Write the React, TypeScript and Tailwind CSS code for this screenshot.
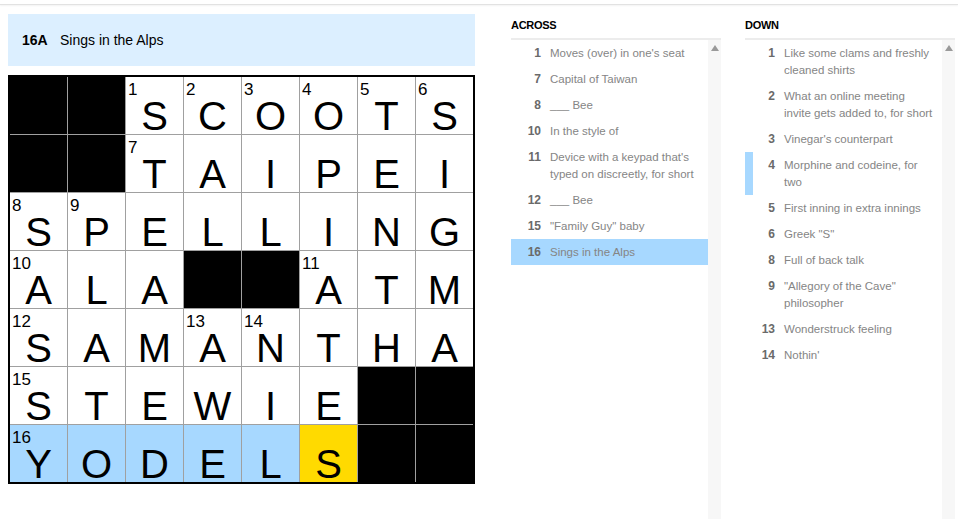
import React from "react";

const GRID = [
  "##SCOOTS",
  "##TAIPEI",
  "SPELLING",
  "ALA##ATM",
  "SAMANTHA",
  "STEWIE##",
  "YODELS##",
];

const NUMS: Record<string, number> = {
  "0-2": 1, "0-3": 2, "0-4": 3, "0-5": 4, "0-6": 5, "0-7": 6,
  "1-2": 7,
  "2-0": 8, "2-1": 9,
  "3-0": 10, "3-5": 11,
  "4-0": 12, "4-3": 13, "4-4": 14,
  "5-0": 15,
  "6-0": 16,
};

const ACROSS = [
  { n: 1, t: "Moves (over) in one's seat" },
  { n: 7, t: "Capital of Taiwan" },
  { n: 8, t: "___ Bee" },
  { n: 10, t: "In the style of" },
  { n: 11, t: "Device with a keypad that's typed on discreetly, for short" },
  { n: 12, t: "___ Bee" },
  { n: 15, t: "\"Family Guy\" baby" },
  { n: 16, t: "Sings in the Alps", active: true },
];

// non-breaking space keeps "invite gets" together so it wraps like the original
const DOWN = [
  { n: 1, t: "Like some clams and freshly cleaned shirts" },
  { n: 2, t: "What an online meeting invite\u00a0gets added to, for short" },
  { n: 3, t: "Vinegar's counterpart" },
  { n: 4, t: "Morphine and codeine, for two", related: true },
  { n: 5, t: "First inning in extra innings" },
  { n: 6, t: "Greek \"S\"" },
  { n: 8, t: "Full of back talk" },
  { n: 9, t: "\"Allegory of the Cave\" philosopher" },
  { n: 13, t: "Wonderstruck feeling" },
  { n: 14, t: "Nothin'" },
];

function Cell({ r, c, ch }: { r: number; c: number; ch: string }) {
  const num = NUMS[`${r}-${c}`];
  if (ch === "#") return <div className="bg-black" />;
  let bg = "bg-white";
  if (r === 6 && c < 5) bg = "bg-[#a7d8ff]";
  if (r === 6 && c === 5) bg = "bg-[#ffda00]";
  return (
    <div className={`relative flex items-end justify-center ${bg}`}>
      {num && (
        <span className="absolute left-[2px] top-[4px] text-[17px] leading-none text-black">
          {num}
        </span>
      )}
      <span className="text-[40px] leading-[36px] text-black">{ch}</span>
    </div>
  );
}

function ClueList({ title, clues }: { title: string; clues: { n: number; t: string; active?: boolean; related?: boolean }[] }) {
  return (
    <div className="flex flex-col w-[210px] h-full">
      <div className="pt-[14px] pb-[6px] border-b-2 border-[#ececec] text-[11px] leading-[13px] font-bold text-black tracking-tight">
        {title}
      </div>
      <div className="flex flex-1">
        <ul className="flex-1">
          {clues.map((cl) => (
            <li
              key={cl.n}
              className={`flex py-[4.5px] leading-[17px] border-l-[8px] ${cl.related ? "border-[#a7d8ff]" : "border-transparent"} ${cl.active ? "bg-[#a7d8ff]" : ""}`}
            >
              <span className="w-[22px] shrink-0 text-right font-bold text-[12px] text-[#6a6a6a]">{cl.n}</span>
              <span className="ml-[9px] pr-[4px] text-[11.5px] text-[#858585]">{cl.t}</span>
            </li>
          ))}
        </ul>
        <div className="w-[13px] bg-[#f7f7f7] flex justify-center pt-[5px]">
          <svg width="8" height="6" viewBox="0 0 8 6">
            <path d="M4 0 L8 6 L0 6 Z" fill="#9a9a9a" />
          </svg>
        </div>
      </div>
    </div>
  );
}

export default function App() {
  return (
    <div className="w-[958px] h-[519px] overflow-hidden bg-white font-['Liberation_Sans',Arial,sans-serif] flex flex-col">
      <div className="h-[5px] border-b border-[#e2e2e2] shadow-[0_1px_2px_rgba(0,0,0,0.05)] shrink-0" />
      <div className="flex flex-1 min-h-0">
        <div className="ml-[8px] w-[467px] flex flex-col">
          <div className="mt-[9px] h-[52px] bg-[#dcefff] flex items-center px-[14px] text-[14px] text-black">
            <span className="font-bold w-[38px]">16A</span>
            <span>Sings in the Alps</span>
          </div>
          <div className="mt-[9px] border-2 border-black bg-[#a0a0a0] grid grid-cols-[repeat(8,57px)] grid-rows-[repeat(7,57px)] gap-px">
            {GRID.map((row, r) =>
              row.split("").map((ch, c) => <Cell key={`${r}-${c}`} r={r} c={c} ch={ch} />)
            )}
          </div>
        </div>
        <div className="ml-[36px]">
          <ClueList title="ACROSS" clues={ACROSS} />
        </div>
        <div className="ml-[24px]">
          <ClueList title="DOWN" clues={DOWN} />
        </div>
      </div>
    </div>
  );
}
